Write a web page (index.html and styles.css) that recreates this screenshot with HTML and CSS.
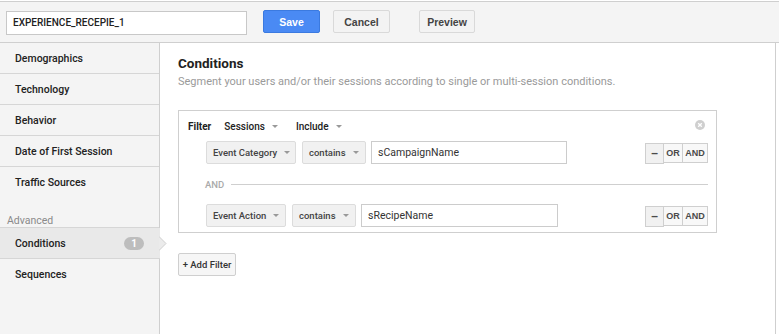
FILE: index.html
```html
<!DOCTYPE html>
<html>
<head>
<meta charset="utf-8">
<link rel="stylesheet" href="styles.css">
</head>
<body>
<header class="topbar">
  <div class="name-input">EXPERIENCE_RECEPIE_1</div>
  <button class="btn btn-primary">Save</button>
  <button class="btn btn-cancel">Cancel</button>
  <button class="btn btn-preview">Preview</button>
</header>
<div class="main">
  <nav class="sidebar">
    <div class="nav-item">Demographics</div>
    <div class="nav-item">Technology</div>
    <div class="nav-item">Behavior</div>
    <div class="nav-item">Date of First Session</div>
    <div class="nav-item nav-last">Traffic Sources</div>
    <div class="nav-label">Advanced</div>
    <div class="nav-item active">Conditions <span class="badge">1</span>
      <svg class="pointer" width="8" height="15" viewBox="0 0 8 15"><path d="M0 0.5 L7 7.5 L0 14.5" fill="#ebebeb" stroke="#cfcfcf" stroke-width="1"/></svg>
    </div>
    <div class="nav-item nav-last">Sequences</div>
  </nav>
  <section class="content">
    <h2 class="title">Conditions</h2>
    <p class="desc">Segment your users and/or their sessions according to single or multi-session conditions.</p>
    <div class="filter-box">
      <div class="filter-head">
        <span class="filter-label">Filter</span>
        <span class="dd">Sessions <span class="caret"></span></span>
        <span class="dd">Include <span class="caret"></span></span>
        <svg class="close" width="10" height="10" viewBox="0 0 10 10"><circle cx="5" cy="5" r="5" fill="#cfcfcf"/><path d="M3.2 3.2 L6.8 6.8 M6.8 3.2 L3.2 6.8" stroke="#fff" stroke-width="1.3"/></svg>
      </div>
      <div class="cond-row">
        <span class="select sel-cat">Event Category <span class="caret"></span></span>
        <span class="select sel-op">contains <span class="caret"></span></span>
        <span class="value val-1">sCampaignName</span>
        <span class="ops"><span class="op op-minus">&#8211;</span><span class="op op-or">OR</span><span class="op op-and">AND</span></span>
      </div>
      <div class="and-sep"><span class="and-text">AND</span><span class="and-line"></span></div>
      <div class="cond-row">
        <span class="select sel-act">Event Action <span class="caret"></span></span>
        <span class="select sel-op">contains <span class="caret"></span></span>
        <span class="value val-2">sRecipeName</span>
        <span class="ops"><span class="op op-minus">&#8211;</span><span class="op op-or">OR</span><span class="op op-and">AND</span></span>
      </div>
    </div>
    <button class="add-filter">+ Add Filter</button>
  </section>
</div>
</body>
</html>
```
FILE: styles.css
```css
* { box-sizing: border-box; }
html, body { margin: 0; padding: 0; background: #fff; }
body {
  width: 779px;
  height: 334px;
  overflow: hidden;
  font-family: Roboto, "Liberation Sans", Arial, sans-serif;
  color: #222;
  display: flex;
  flex-direction: column;
}
.topbar {
  margin-top: 1px;
  height: 42px;
  background: #f4f4f4;
  border-top: 1px solid #cfcfcf;
  border-bottom: 1px solid #cfcfcf;
  display: flex;
  align-items: flex-start;
  padding-top: 8px;
  padding-left: 6px;
}
.name-input {
  width: 241px;
  height: 24px;
  background: #fff;
  border: 1px solid #c8c8c8;
  font-size: 10px;
  font-weight: 500;
  line-height: 22px;
  padding-left: 6px;
  color: #222;
  margin-top: 1px;
  white-space: nowrap;
}
.btn {
  font-family: "Liberation Sans", Arial, sans-serif;
  font-size: 10.5px;
  font-weight: bold;
  height: 23px;
  border-radius: 2px;
  border: 1px solid #d9d9d9;
  background: #f3f3f3;
  color: #444;
  padding: 0;
  cursor: pointer;
}
.btn-primary {
  margin-left: 16px;
  width: 57px;
  background: #4a8af4;
  border-color: #3b7ae0;
  color: #fff;
}
.btn-cancel { margin-left: 13px; width: 57px; }
.btn-preview { margin-left: 29px; width: 56px; }

.main {
  flex: 1;
  display: flex;
  min-height: 0;
}
.sidebar {
  width: 160px;
  flex: none;
  background: #f4f4f4;
  border-right: 1px solid #cfcfcf;
  display: flex;
  flex-direction: column;
}
.nav-item {
  position: relative;
  height: 31px;
  flex: none;
  border-bottom: 1px solid #d6d6d6;
  display: flex;
  align-items: center;
  padding-left: 15px;
  padding-right: 16px;
  font-size: 10.5px;
  font-weight: 500;
  color: #222;
  white-space: nowrap;
}
.nav-last { border-bottom: none; height: 30px; }
.nav-label {
  height: 31px;
  flex: none;
  padding-top: 17px;
  padding-left: 7px;
  font-size: 10.5px;
  line-height: 13px;
  color: #8a8a8a;
  border-bottom: 1px solid #d6d6d6;
}
.nav-item.active {
  background: #e9e9e9;
  justify-content: space-between;
  margin-right: -1px;
}
.badge {
  width: 20px;
  height: 13px;
  border-radius: 7px;
  background: #bdbdbd;
  color: #fff;
  font-size: 10px;
  font-weight: bold;
  line-height: 13px;
  text-align: center;
}
.pointer {
  position: absolute;
  right: -7px;
  top: 8px;
}

.content {
  flex: 1;
  border-right: 1px solid #cfcfcf;
  margin-right: 3px;
  padding: 11px 0 0 18px;
}
.title {
  margin: 0;
  font-size: 13.5px;
  line-height: 18px;
  font-weight: bold;
  color: #222;
}
.desc {
  margin: 2px 0 0;
  font-size: 11px;
  line-height: 16px;
  color: #9a9a9a;
}
.filter-box {
  margin-top: 20px;
  width: 539px;
  border: 1px solid #cfcfcf;
  padding: 0 8px 5px 9px;
}
.filter-head {
  position: relative;
  height: 30px;
  display: flex;
  align-items: center;
  font-size: 10px;
  font-weight: 500;
  color: #222;
  padding-top: 1px;
}
.filter-label { font-weight: bold; margin-right: 13px; }
.dd { display: inline-flex; align-items: center; margin-right: 18px; }
.caret {
  display: inline-block;
  width: 0;
  height: 0;
  border-left: 3px solid transparent;
  border-right: 3px solid transparent;
  border-top: 3px solid #999;
  margin-left: 7px;
}
.close {
  position: absolute;
  right: 3px;
  top: 9px;
}
.cond-row {
  display: flex;
  align-items: center;
  height: 23px;
  padding-left: 18px;
}
.select {
  height: 23px;
  display: inline-flex;
  align-items: center;
  justify-content: space-between;
  background: #f1f1f1;
  border: 1px solid #dcdcdc;
  border-radius: 2px;
  font-size: 9.5px;
  font-weight: 500;
  color: #444;
  padding: 0 11px 0 6px;
  margin-right: 6px;
  white-space: nowrap;
}
.sel-cat { width: 90px; }
.sel-act { width: 80px; }
.sel-op { width: 64px; margin-right: 5px; }
.value {
  height: 23px;
  border: 1px solid #cccccc;
  background: #fff;
  font-size: 10.5px;
  color: #333;
  line-height: 21px;
  padding-left: 6px;
}
.val-1 { width: 196px; }
.val-2 { width: 197px; }
.ops {
  margin-left: auto;
  display: flex;
  height: 20px;
}
.op {
  height: 20px;
  border: 1px solid #cfcfcf;
  background: #f8f8f8;
  font-family: "Liberation Sans", Arial, sans-serif;
  font-size: 9px;
  font-weight: bold;
  color: #4a4a4a;
  display: flex;
  align-items: center;
  justify-content: center;
}
.op-minus { width: 19px; background: #f1f1f1; font-size: 12px; height: 21px; }
.op-or { width: 19px; border-left: none; }
.op-and { width: 25px; border-left: none; }
.and-sep {
  height: 40px;
  display: flex;
  align-items: center;
  padding-left: 17px;
}
.and-text {
  font-size: 9.5px;
  font-weight: 500;
  color: #aaa;
  margin-right: 7px;
}
.and-line {
  flex: 1;
  height: 1px;
  background: #cfcfcf;
}
.add-filter {
  margin-top: 20px;
  height: 23px;
  width: 58px;
  padding: 0;
  font-family: Roboto, "Liberation Sans", Arial, sans-serif;
  font-size: 9.5px;
  font-weight: 500;
  color: #333;
  background: #f6f6f6;
  border: 1px solid #cfcfcf;
  border-radius: 2px;
  white-space: nowrap;
}
```
